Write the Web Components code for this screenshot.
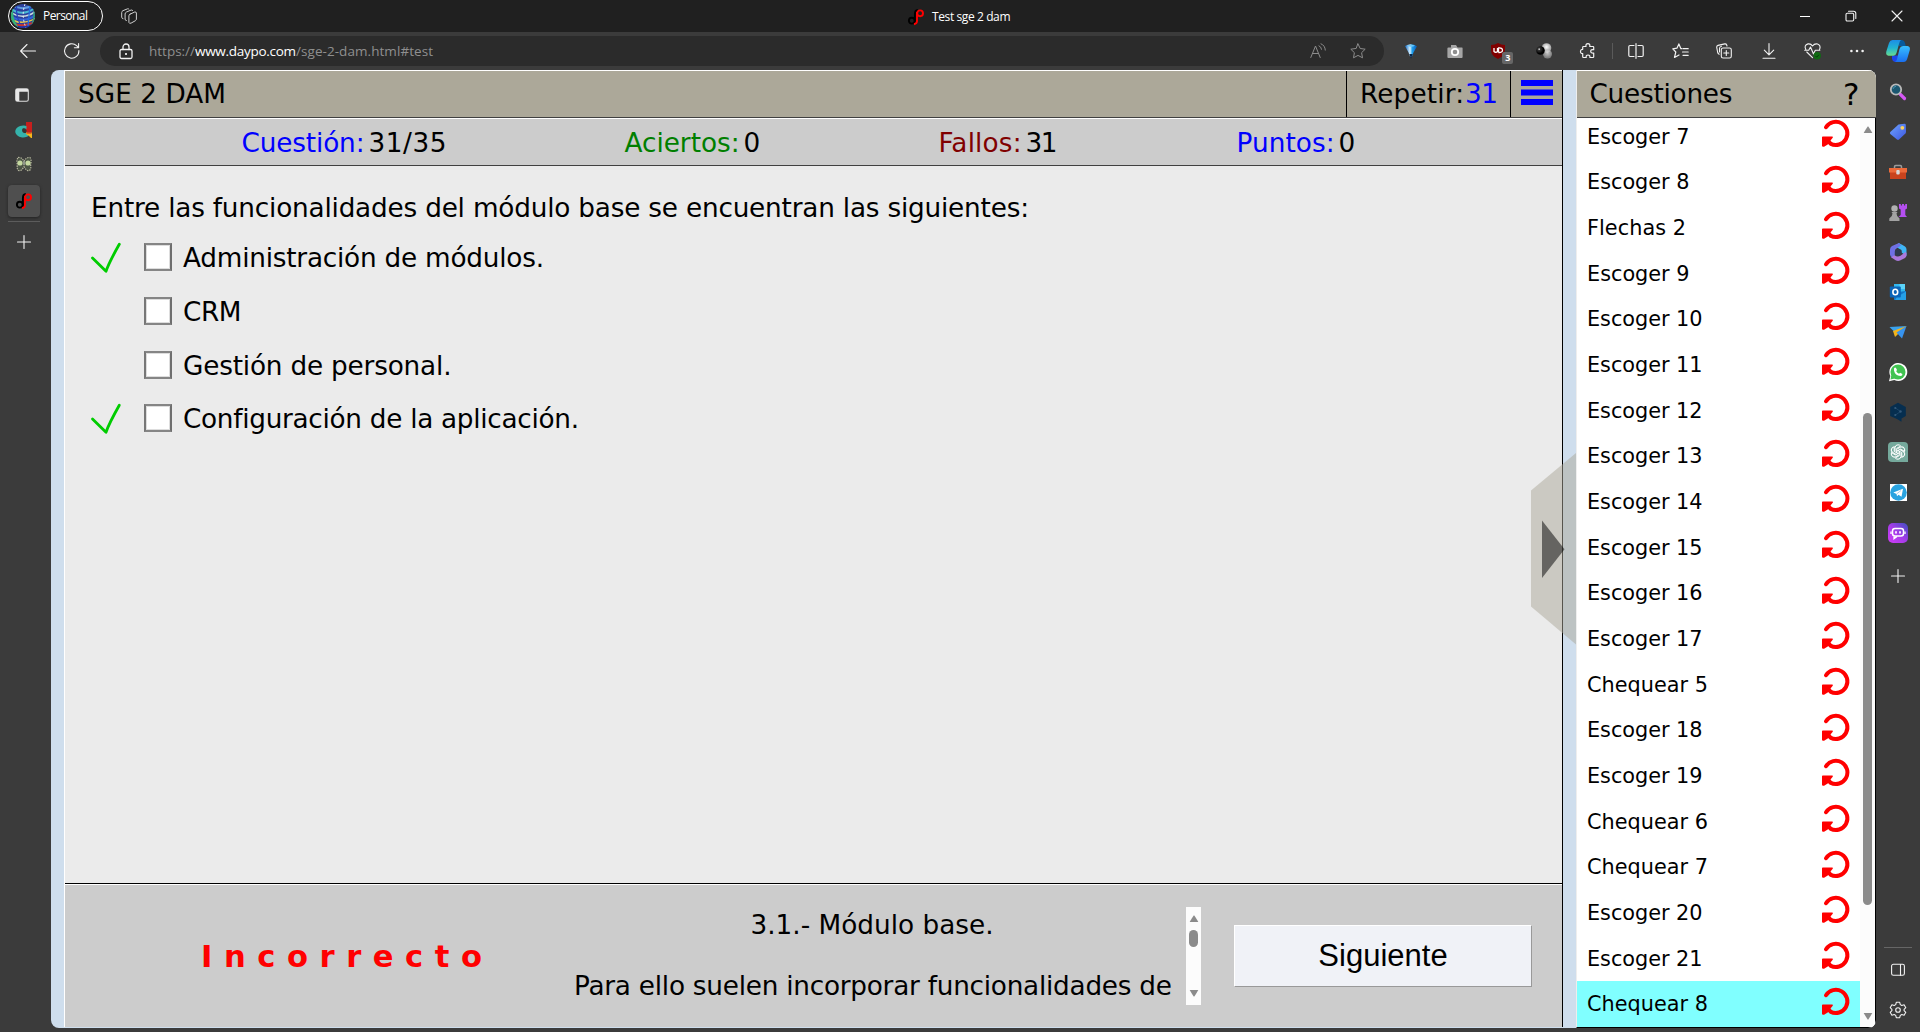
<!DOCTYPE html>
<html lang="es">
<head>
<meta charset="utf-8">
<title>Test sge 2 dam</title>
<style>
html,body{margin:0;padding:0;height:100%;overflow:hidden;background:#3b3b3b}
</style>
</head>
<body>
<browser-window></browser-window>
<script>
const define = (name, css, html, ready) => {
  customElements.define(name, class extends HTMLElement {
    connectedCallback() {
      if (this.shadowRoot) return;
      const root = this.attachShadow({ mode: 'open' });
      root.innerHTML = '<style>*{box-sizing:border-box}' + css + '</style>' + (typeof html === 'function' ? html(this) : html);
      if (ready) ready(this, root);
    }
  });
};

/* Text tracked so that its line takes exactly the width in "w". */
define('fit-text', ':host{display:inline-block;white-space:pre}span{display:inline-block;white-space:pre}',
  el => '<span>' + el.getAttribute('t') + '</span>',
  (el, root) => {
    const s = root.querySelector('span'), w = +el.getAttribute('w'), n = s.textContent.length;
    if (!w) return;
    const ls = n > 1 ? (w - s.getBoundingClientRect().width) / (n - 1) : 0;
    s.style.letterSpacing = ls + 'px';
    s.style.marginRight = -ls + 'px';
  });

const pen = (color = '#f2f2f2', width = 1.1) => `fill="none" stroke="${color}" stroke-width="${width}" stroke-linecap="round" stroke-linejoin="round"`;
const S = pen();
const ICONS = {
  avatar: [24, 24, `<defs><clipPath id="c"><circle cx="12" cy="12" r="12"/></clipPath></defs><g clip-path="url(#c)" fill="none"><rect width="24" height="24" fill="#2c3f9c"/><path d="M-1 4Q12 14 25 3" stroke="#49b9d2" stroke-width="2"/><path d="M-1 0Q12 9 25 -1" stroke="#5f9be0" stroke-width="2"/><path d="M-1 8Q12 17 25 7" stroke="#c7d8df" stroke-width="1.500"/><path d="M-1 12Q12 20 25 11" stroke="#3264d8" stroke-width="2"/><path d="M-1 15Q12 22 25 14" stroke="#e0c34a" stroke-width="1.6"/><path d="M-1 18Q12 25 25 17" stroke="#c8342f" stroke-width="2"/><path d="M-1 21Q12 27 25 20" stroke="#222ba5" stroke-width="2"/><path d="M1 2Q-1 14 6 24" stroke="#32b27a" stroke-width="3"/><path d="M6 0Q4 10 9 20" stroke="#2743c0" stroke-width="1.300"/><path d="M14 0Q10 12 15 24" stroke="#eef0f0" stroke-width="1" stroke-dasharray="2 2"/><path d="M19 1Q18 12 17 22" stroke="#1f6fe0" stroke-width="1.300"/><path d="M23 4Q24 12 21 22" stroke="#2e9c78" stroke-width="1.6"/></g>`],
  workspaces: [16, 16, `<g ${pen('#cfcfcf', 1)}><path d="M9 6.200 13.700 4q1.500-.4 1.700 1v6.200q-.1 1-1 1.500l-4.300 2.400q-1.800.8-2.200-.7V7.800q0-1.100 1.100-1.600z"/><path d="M5.400 12.600q-1.300-.1-1.300-1.500V6q0-1.300 1.200-1.900L10.200 2q1.200-.2 1.500.6"/><path d="M2 10.700Q.7 10.500.7 9.200V4.500q0-1.300 1.200-1.800L6.600.8q1-.2 1.400.4"/></g>`],
  back: [16, 16, `<path d="M15.500 8H.8M7 1.500.6 8 7 14.500" ${S}/>`],
  reload: [16, 16, `<path d="M14.900 7.500A7.200 7.200 0 1 1 12.600 2.700L14.400 4.600M14.600.6V4.800H10.400" ${S}/>`],
  lock: [14, 17, `<g ${pen('#f2f2f2', 1.3)}><rect x="1" y="6.500" width="12" height="9" rx="1.500"/><path d="M4 6.500V4a3 3 0 0 1 6 0v2.500"/></g><rect x="6.100" y="10.100" width="1.800" height="1.800" fill="#fff"/>`],
  aloud: [16, 16, `<g ${pen('#8c8c8c', 1)}><path d="M.8 14.500 5.500 3 10.200 14.500M2.500 10.500h6"/><path d="M9 2.800q2.300 1 2.500 3.500M11 .8q4 1.500 4.300 6.300"/></g>`],
  star: [16, 16, `<path d="M8 .9 10.200 5.500 15.200 6.200 11.600 9.700 12.500 14.800 8 12.400 3.500 14.800 4.400 9.700.8 6.200 5.800 5.500z" ${pen('#8c8c8c', 1)}/>`],
  gem: [14, 16, `<defs><linearGradient id="g"><stop offset="0" stop-color="#0b66c4"/><stop offset=".42" stop-color="#d6f1ff"/><stop offset=".6" stop-color="#1da0f0"/><stop offset="1" stop-color="#0956b0"/></linearGradient></defs><path d="M1 3Q7-.8 13 3.200L9.500 9.500 7.800 14H6.200L4.500 9.500z" fill="url(#g)"/><path d="M3 2.800Q7 .8 11 2.800 7 4.500 3 2.800z" fill="#6cc8fa"/><path d="M5.300 11h3.400L7 15.800z" fill="#08264b"/>`],
  camera: [16, 16, `<path d="M1.500 4.500H4V2h5l1.500 2.500H15q.6 0 .6.800V14q0 1-1 1H1.400q-1 0-1-1V5.500q0-1 1.100-1z" fill="#a6a6a6"/><circle cx="8" cy="9" r="3.200" fill="#8f8f8f" stroke="#fff" stroke-width="1.800"/>`],
  shield: [16, 16, `<path d="M8 0Q11 2 15 2v5q0 6-7 9Q1 13 1 7V2Q5 2 8 0z" fill="#800000"/><path d="M4 5v3.500q1.800 1.500 3.500 0V5M8.500 9.500V5q4-.3 4 2.200T8.500 9.500" fill="none" stroke="#fff" stroke-width="1.300"/>`],
  balls: [16, 16, `<defs><radialGradient id="b" cx=".35" cy=".35"><stop offset="0" stop-color="#fff"/><stop offset=".3" stop-color="#333"/><stop offset="1" stop-color="#000"/></radialGradient><radialGradient id="w" cx=".5" cy=".4"><stop offset="0" stop-color="#fff"/><stop offset="1" stop-color="#a0a0a0"/></radialGradient></defs><circle cx="10.500" cy="5" r="4.800" fill="url(#w)"/><circle cx="11.500" cy="11" r="4.500" fill="url(#w)" opacity=".7"/><circle cx="4.500" cy="7.500" r="4.300" fill="url(#b)"/>`],
  puzzle: [16, 16, `<path d="M3.500 3.500H6Q5.500.7 7.900.7T9.800 3.500h3.200q.7 0 .7.700V6.700q-3-.4-3 1.600t3 1.700v3.800q0 .7-.7.700H9.900Q10.200 12 8 12t-1.800 2.500H3.500q-.8 0-.8-.7V10.700Q.5 10.800.5 8.500t2.200-2.200V4.200q0-.7.800-.7z" ${pen('#f2f2f2', 1.2)}/>`],
  split: [16, 16, `<path d="M6 2.500H2Q.8 2.500.8 3.700v8.600q0 1.200 1.200 1.200h4M10 2.500h4q1.200 0 1.200 1.200v8.600q0 1.200-1.200 1.200h-4M8 .7v14.600" ${pen('#f2f2f2', 1.2)}/>`],
  favorites: [17, 16, `<path d="M9.700 5.700H8.900L6.900.9 4.900 5.200.8 5.900 3.800 9 2.500 14.500 7 12M11 5.700h5.200M10.500 9h5.700M11 12.300h5.200" ${pen('#f2f2f2', 1.2)}/>`],
  collections: [16, 16, `<rect x="5.300" y="5" width="10" height="10" rx="1.800" ${S}/><path d="M10.300 7.500v5M7.800 10h5M3.200 11.200Q2 10.700 1.700 9.500L.7 4.300Q.5 2.800 2 2.400L8.800.9q1.400-.2 1.900 1.100l.3 1M3.500 9V5.500q0-2 2-2.300" ${S}/>`],
  download: [16, 16, `<path d="M8 .6v11M3.300 7.200 8 11.900l4.700-4.700M2 15.300h12" ${S}/>`],
  health: [18, 17, `<path d="M1.800 6.500Q-.3 2 4 .9 7 .5 8.500 3 10.500.3 13.500 1q3.700 1.300 2.100 5.500M2.800 9l5.700 5.700M.7 7.300h4L6.500 4l3 7 1.800-3.700h4.500" ${S}/><circle cx="13.200" cy="12.800" r="3.700" fill="#0f6b12"/><path d="m11.500 13 1.200 1.200 2.200-2.400" fill="none" stroke="#083b0a"/>`],
  dots: [16, 16, `<g fill="#f2f2f2"><circle cx="2.400" cy="8" r="1.300"/><circle cx="8" cy="8" r="1.300"/><circle cx="13.600" cy="8" r="1.300"/></g>`],
  copilot: [24, 24, `<defs><linearGradient id="p" x2="0" y2="1"><stop offset="0" stop-color="#1c8de6"/><stop offset=".5" stop-color="#20b3d2"/><stop offset="1" stop-color="#67dc8f"/></linearGradient><linearGradient id="q" x2="0" y2="1"><stop offset="0" stop-color="#38bfff"/><stop offset="1" stop-color="#1a6ff0"/></linearGradient></defs><path d="M12 1h4q2.500.3 3 3l.8 3H13z" fill="#075a9c"/><path d="M6 16.500h7l-2 6.500H9q-2.500-.5-3-3z" fill="#1e43e8"/><path d="M6.500 1H15q-1.400 1-2 4L10.500 14q-.7 2.600-3 2.700H2.500Q-.5 16.500.3 12.500L3 4Q4 1.200 6.500 1z" fill="url(#p)"/><path d="M17 7h4.500q3 .5 2.300 4l-2.500 8.500Q20.300 23 17.500 23H9q1.500-.6 2.200-3.500L13.500 10q.7-2.800 3.500-3z" fill="url(#q)"/>`],
  minimize: [12, 12, `<path d="M1 6.500h10" stroke="#fff"/>`],
  restore: [12, 12, `<g ${S}><rect x="1" y="3.300" width="7.700" height="7.700" rx="1.200"/><path d="M3.500 1.200h5q2.300 0 2.300 2.300v5"/></g>`],
  close: [12, 12, `<path d="m1 1 10 10M11 1 1 11" ${S}/>`],
  daypo: [16, 16, `<g fill="none" stroke-width="1.900"><circle cx="3.800" cy="11.700" r="2.900" stroke="#000"/><path d="M6.900 15V5Q7 1.200 9.800 1" stroke="#000"/><circle cx="12.100" cy="4.300" r="2.900" stroke="red"/><path d="M9 3v9q0 2.500-3 3.200" stroke="red"/></g>`],
  tabs: [14, 14, `<rect x=".7" y=".7" width="12.600" height="12.600" rx="1.800" ${pen('#ddd')}/><path d="M1 1h12v2.800H4.300V13H1z" fill="#e8e8e8"/>`],
  site1: [16, 16, `<path d="M10 0h6v10h-6z" fill="#c71f1d"/><path d="M8 3.500a8 6 0 1 0 4.500 10.500L10 9H7q-1-2 2-2.500L10.500 7V4z" fill="#35b3ab"/><path d="M6 8q0-2 2.500-2v2h2v3H8q-2-.5-2-3z" fill="#3a3330"/><path d="M10 10.500h6V16h-1l-2-2-3-2z" fill="#f4b71c"/><path d="M10.500 11h5" stroke="#e3311d" stroke-width="1.200"/>`],
  site2: [16, 16, `<path d="M2 1.500q4-.5 6 4 2-4.500 6-4 2 3.500.5 7 1 4-1 6-3 1-5.500-4-2.500 5-5.500 4-2-2-1-6Q0 5 2 1.500z" fill="#4b5445" stroke="#b3b29c" stroke-width="1.200" stroke-dasharray="1.500 1"/><circle cx="4" cy="7" r="2.600" fill="#c5d9a0"/><circle cx="12" cy="7" r="2.600" fill="#c5d9a0"/><path d="M7 5h2v4H7z" fill="#8f9588"/>`],
  plus: [14, 14, `<path d="M7 .5v13M.5 7h13" ${S}/>`],
  search: [18, 18, `<path d="m11.500 11.500 4 4" stroke="#d657f5" stroke-width="3.200" stroke-linecap="round"/><circle cx="7" cy="6.500" r="5.200" fill="#1b5770" stroke="#b9b9b9" stroke-width="1.800"/><path d="M4 6q.5-2.500 3-2.700" fill="none" stroke="#4a93b0"/>`],
  tag: [18, 18, `<defs><linearGradient id="t" x2="1" y2="1"><stop offset="0" stop-color="#6fa5ff"/><stop offset="1" stop-color="#3d56e0"/></linearGradient></defs><path d="M9.500 1.500 15.500.7q1.200 0 1.300 1.200L17 9q0 .8-.6 1.400L10 16.600q-1 .8-2 0L1.300 11q-.8-1 0-2z" fill="url(#t)"/><circle cx="13.300" cy="4.800" r="1.900" fill="#ffd35a"/>`],
  toolbox: [18, 18, `<path d="M5.500 5.500V3.700q0-1.200 1.200-1.200h4.600q1.200 0 1.200 1.200v1.800" fill="none" stroke="#9b9b9b" stroke-width="1.500"/><path d="M1 5.500h16V16H1z" fill="#c9431d"/><path d="M0 5h18v4.500H0z" fill="#ec6a3a"/><rect x="7.300" y="7" width="3.400" height="4.500" rx="1" fill="#d9d9d9"/>`],
  chess: [18, 18, `<path d="M10 1h1.800v1.500H13V1h2v1.500h1.200V1H18v4.500l-1.700 1v5.500l1.700 2H9.500l2.200-2V6.500L10 5.500z" fill="#b44ff0"/><circle cx="5.500" cy="5.500" r="3.200" fill="#b0b0b0"/><path d="M2.500 9h6L7.500 10.500q0 3 3 5V18H.3v-2.500Q3.500 13.500 3.500 10.500z" fill="#a2a2a2"/>`],
  m365: [18, 18, `<path d="M9.500 0q1 0 6.500 3.500 1.500 1 1.500 3V13l-5-3.500V7L8 4.500z" fill="#3fb6f5"/><path d="M10 0 3 3Q1 4 1 6.500V11q0 2.500 2 3.500l2.800-2V8.500q0-2.200 2-3.200L12 2.500z" fill="#6f70e4"/><path d="M17.500 10v2q0 2-1.500 3l-5 2.500q-2 .8-4 0L2 14.300l3.500-2q3 2.200 6 .5L16.500 9z" fill="#ab79dc"/><path d="m6 8 3-2.500L12.500 8v3L9 13l-3-1.500z" fill="#2f3b50"/>`],
  outlook: [18, 18, `<path d="M5 1h11v10H5z" fill="#33b8ef"/><path d="M10.500 1H16v5h-5.500z" fill="#5bd4fa"/><path d="M5 9.500 17 8v9H5z" fill="#1277c8"/><path d="m8 14 9-5.500V17H6z" fill="#25a0e8"/><rect x=".8" y="3.500" width="11" height="11" rx="1" fill="#0b64b7"/><ellipse cx="6.300" cy="9" rx="2.400" ry="2.700" fill="none" stroke="#fff" stroke-width="1.600"/>`],
  send: [18, 18, `<path d="M.5 4 17.500 3 5.500 9z" fill="#3aa2ec"/><path d="M4 8 17.500 3 6 14z" fill="#f4b41a"/><path d="m7.500 9.500 10-6.500-4.500 12.500z" fill="#3793ee"/>`],
  whatsapp: [20, 20, `<path d="M1 19.300 2.300 14A9 9 0 1 1 6.300 18z" fill="#fff"/><circle cx="10" cy="10" r="7.500" fill="#41c351"/><path d="M3.300 13 2.500 17.500 7 16.500z" fill="#41c351"/><path d="M6 6.500Q7 5 8 6l1 2-.8 1.200q1 1.800 2.800 2.500l1.200-1 2.200 1.200q.3 2-2 2.200Q7 13.500 6 8.500z" fill="#fff"/>`],
  deepl: [18, 20, `<path d="M9 .8 16.800 5v9L12.500 16.500v3.200L8 17 1.200 14V5z" fill="#062e4f"/><path d="m6.500 6 5 3.500-5 3.500" fill="none" stroke="#1c4568"/><g fill="#34597a"><circle cx="6.300" cy="6" r="1.100"/><circle cx="11.500" cy="9.500" r="1.200"/><circle cx="6.300" cy="13" r="1.100"/></g>`],
  chatgpt: [20, 20, `<path d="M4 0h12q4 0 4 4v16H4q-4 0-4-4V4q0-4 4-4z" fill="#75a99c"/><g fill="none" stroke="#fff" stroke-width="1">${[0, 60, 120, 180, 240, 300].map(a => `<path transform="rotate(${a} 10 10)" d="M7 9V5.500Q7.500 2.800 10 2.800q1.700 0 2.700 1.200L8.700 6.400V11"/>`).join('')}</g>`],
  telegram: [17, 17, `<rect width="17" height="17" fill="#fff"/><circle cx="8.500" cy="8.500" r="8.300" fill="#29a3e0"/><path d="M3.300 8.500 13 4.700 11.500 12.800 8.500 10.800 7 12.300 6.600 9.900z" fill="#fff"/><path d="m6.700 9.900 4.300-3.400" stroke="#a9cfe8"/>`],
  poe: [20, 20, `<defs><linearGradient id="o" x1="0" y1="1" x2="1" y2="0"><stop offset="0" stop-color="#d23cf8"/><stop offset=".5" stop-color="#a43ce8"/><stop offset="1" stop-color="#3c4fc0"/></linearGradient></defs><rect width="20" height="20" rx="5" fill="url(#o)"/><rect x="4.500" y="5.500" width="11" height="7.500" rx="2.500" fill="none" stroke="#fff" stroke-width="1.500"/><path d="M3 8.500v2.500M17 8.500v2.500M6 13.500v2.300l3-2.300" stroke="#fff" stroke-width="1.300" fill="#fff"/><path d="M8 8.200v2.300M12 8.200v2.300" stroke="#fff" stroke-width="1.700"/>`],
  panel: [14, 14, `<rect x=".6" y="1.300" width="12.800" height="11" rx="1.800" ${S}/><path d="M9.500 1.500v10.800" ${S}/>`],
  gear: [18, 18, `<path d="M7.300 1.300h3.400l.6 2.300 1.500.9 2.300-.7 1.700 2.900-1.700 1.600v1.400l1.700 1.600-1.700 2.900-2.300-.7-1.500.9-.6 2.300H7.300l-.6-2.300-1.500-.9-2.300.7L1.200 11.300 2.900 9.700V8.300L1.200 6.700l1.700-2.900 2.300.7 1.500-.9z" ${S}/><circle cx="9" cy="9" r="2.300" ${S}/>`],
  check: [30, 31, `<path d="M1.500 15 15 28.300Q18 19.500 28.300 1.300" fill="none" stroke="#0c0" stroke-width="2.800" stroke-linecap="round" stroke-linejoin="round"/>`],
  repeat: [30, 30, `<path d="M5 8.200A11.600 11.600 0 1 1 9.500 24.700" fill="none" stroke="red" stroke-width="4" stroke-linecap="round"/><path d="M1 18.300q0-.8.800-.8h9.700q.9.600 0 1.600L9.500 21.500l2.500 3-2 2-2.500-1.500-4.400 2.700q-2.100.6-2.100-1z" fill="red"/>`],
  menu: [32, 26, `<path d="M0 0h32v6H0zM0 9.500h32v6H0zM0 19h32v6H0z" fill="#00f"/>`],
  up: [10, 7, `<path d="M5 .3Q5.500.3 9.300 7H.7Q4.500.3 5 .3z" fill="#8b8b8b"/>`],
  down: [10, 7, `<path d="M5 6.700Q4.500 6.700.7 0h8.600Q5.500 6.700 5 6.700z" fill="#8b8b8b"/>`]
};

define('ui-icon', ':host{display:inline-flex;flex:none;align-items:center;justify-content:center}svg{display:block;overflow:visible}',
  el => { const [w, h, d] = ICONS[el.getAttribute('name')]; return `<svg width="${w}" height="${h}" viewBox="0 0 ${w} ${h}">${d}</svg>`; });

define('title-bar', `
  :host{display:flex;height:32px;background:#202020;color:#fff;font:12px/30px "Open Sans",sans-serif;align-items:center}
  .pill{display:flex;align-items:center;width:95px;height:30px;margin-left:8px;border:1px solid #fff;border-radius:15px;padding-left:2px;gap:8px}
  .title{display:flex;align-items:center;gap:8px;margin-left:771px;flex:1;padding-top:1px}
  .win ui-icon{width:46px}.win{display:flex}`,
  `<div class="pill"><ui-icon name="avatar"></ui-icon><fit-text t="Personal" w="45"></fit-text></div>
   <ui-icon name="workspaces" style="margin-left:18px"></ui-icon>
   <div class="title"><ui-icon name="daypo"></ui-icon><fit-text t="Test sge 2 dam" w="78.500"></fit-text></div>
   <div class="win"><ui-icon name="minimize"></ui-icon><ui-icon name="restore"></ui-icon><ui-icon name="close"></ui-icon></div>`);

define('tool-bar', `
  :host{display:flex;height:38px;align-items:center;background:#3b3b3b;font:13.500px/30px "Open Sans",sans-serif;color:#8f8f8f}
  .addr{display:flex;align-items:center;margin-left:20px;width:1284px;height:30px;border-radius:15px;background:#2b2b2b;padding-left:19px}
  .url{margin-left:16px;flex:1;display:flex}.url b{font-weight:400;color:#fff}
  .ext{display:flex;align-items:center;margin-left:5px}.ext>ui-icon,.badge{width:44.200px;display:flex;justify-content:center}
  .badge{position:relative}.badge span{position:absolute;left:25px;top:9px;width:11px;height:12px;border-radius:2px;background:#666;color:#fff;font:bold 9px/12px "Open Sans",sans-serif;text-align:center}
  .sep{width:1px;height:16px;background:#5a5a5a;margin:0 1px 0 2px}`,
  `<ui-icon name="back" style="margin-left:20px"></ui-icon><ui-icon name="reload" style="margin-left:28px"></ui-icon>
   <div class="addr"><ui-icon name="lock"></ui-icon>
     <div class="url"><fit-text t="https://" w="46"></fit-text><b><fit-text t="www.daypo.com" w="101"></fit-text></b><fit-text t="/sge-2-dam.html#test" w="137"></fit-text></div>
     <ui-icon name="aloud" style="margin-right:24px"></ui-icon><ui-icon name="star" style="margin-right:18px"></ui-icon></div>
   <div class="ext"><ui-icon name="gem"></ui-icon><ui-icon name="camera"></ui-icon><div class="badge"><ui-icon name="shield" style="margin-left:-2px"></ui-icon><span>3</span></div><ui-icon name="balls"></ui-icon><ui-icon name="puzzle"></ui-icon><div class="sep"></div>
   <ui-icon name="split"></ui-icon><ui-icon name="favorites"></ui-icon><ui-icon name="collections"></ui-icon><ui-icon name="download"></ui-icon><ui-icon name="health"></ui-icon><ui-icon name="dots"></ui-icon><ui-icon name="copilot" style="width:38px"></ui-icon></div>`);

define('tab-rail', `
  :host{display:flex;flex-direction:column;align-items:center;flex:0 0 51px;padding:8px 3px 0 0;background:#3b3b3b}
  ui-icon{width:32px;height:34.500px}
  .on{height:32px;border-radius:4px;background:#4f4f4f;box-shadow:0 1px 3px #222;display:flex;margin-top:3px}.on ui-icon{height:32px}
  hr{width:32px;height:1px;border:0;background:#5c5c5c;margin:4px 0 3px}`,
  `<ui-icon name="tabs" style="width:34px;padding-right:4px"></ui-icon><ui-icon name="site1" style="height:34px"></ui-icon><ui-icon name="site2" style="height:35.500px"></ui-icon><div class="on"><ui-icon name="daypo"></ui-icon></div><hr><ui-icon name="plus" style="padding-right:1px"></ui-icon>`);

define('side-rail', `
  :host{display:flex;flex-direction:column;flex:0 0 44px;align-items:center;background:#3b3b3b;padding:1.500px 0 2px}
  ui-icon{width:32px;height:40.100px}hr{width:28px;height:1px;border:0;background:#666;margin:auto 0 2px}`,
  ['search', 'tag', 'toolbox', 'chess', 'm365', 'outlook', 'send', 'whatsapp', 'deepl', 'chatgpt', 'telegram', 'poe', 'plus'].map(n => `<ui-icon name="${n}"${n === 'plus' ? ' style="height:46px"' : ''}></ui-icon>`).join('') +
  '<hr><ui-icon name="panel"></ui-icon><ui-icon name="gear"></ui-icon>');

define('scroll-bar', `
  :host{display:flex;flex-direction:column;align-items:center;width:15px;flex:none;background:#fcfcfc}
  div{background:#8b8b8b;border-radius:5px;flex:none}`,
  el => `<ui-icon name="up"></ui-icon><div style="${el.getAttribute('thumb')}"></div><ui-icon name="down" style="margin-top:auto"></ui-icon>`);

define('title-strip', `
  :host{display:flex;height:48px;flex:none;background:#aca899;border-top:1px solid #fff;border-bottom:1px solid #404040;line-height:46px}`, '<slot></slot>');

define('stat-item', ':host{display:flex;gap:4px;color:#000}.l{color:var(--c)}',
  el => `<fit-text class="l" t="${el.getAttribute('label')}" w="${el.getAttribute('lw')}"></fit-text><fit-text t="${el.getAttribute('value')}" w="${el.getAttribute('vw')}"></fit-text>`);

define('answer-option', `
  :host{display:flex;height:53.700px;align-items:center}
  fit-text{margin-bottom:1px}
  .mark{width:53px;height:31px}.box{width:28px;height:28px;margin:-3px 11px 0 27px;margin-left:27px;background:#fff;border:2px solid #858585;border-right-color:#6e6e6e;border-left-color:#777;box-shadow:inset 0 0 0 1px #ddd}`,
  el => `<div class="mark">${el.hasAttribute('right') ? '<ui-icon name="check"></ui-icon>' : ''}</div><div class="box" style="margin-left:0"></div><fit-text t="${el.getAttribute('label')}" w="${el.getAttribute('w')}"></fit-text>`);

define('quiz-panel', `
  :host{display:flex;flex-direction:column;width:1499px;flex:none;border-left:1px solid #fff;border-right:1px solid #000;background:#ebebeb;font:26.300px/46px "DejaVu Sans",Verdana,sans-serif;color:#000}
  .name{flex:1;padding-left:13px}.rep{width:164px;border-left:1px solid #000;padding-left:13px;display:flex}.rep b{font-weight:400;color:#00f;margin-left:1px}
  .burger{width:52px;border-left:1px solid #000;padding:9px 0 0 10px;line-height:0}
  .stats{display:grid;grid-template-columns:383px 314px 298px 1fr;padding-left:176.500px;height:48px;flex:none;background:#ccc;border-top:1px solid #fff;border-bottom:1px solid #404040;line-height:48px}
  .body{flex:1;padding:27px 0 0 26px;line-height:32px}
  .q{height:32px;margin-bottom:7px;line-height:31px}
  .foot{display:flex;height:144px;flex:none;background:#ccc;border-top:1px solid #000;box-shadow:inset 0 1px #fff}
  .res{width:509px;padding:53px 0 0 136px;font:bold 30.600px/40px "DejaVu Sans",Verdana,sans-serif;color:red}
  .exp{width:612px;height:98px;margin-top:23px;overflow:hidden;text-align:center;line-height:30.700px;padding:2.500px 16px 0 0}
  .exp div{height:30.700px;white-space:nowrap}
  scroll-bar{margin-top:23px;height:98px;padding:8px 0}
  button{margin:41px 0 0 33px;width:298px;height:62px;padding:0;border:1px solid #fff;border-right-color:#999;border-bottom:1px solid #999;border-radius:0;background:#f0f2f7;font:31px/58px "Liberation Sans",Arial,sans-serif;color:#000}`,
  `<title-strip><span class="name"><fit-text t="SGE 2 DAM" w="148"></fit-text></span>
     <span class="rep"><fit-text t="Repetir:" w="104"></fit-text><b><fit-text t="31" w="33"></fit-text></b></span><span class="burger"><ui-icon name="menu"></ui-icon></span></title-strip>
   <div class="stats"><stat-item label="Cuestión:" lw="123" value="31/35" vw="78" style="--c:#00f"></stat-item>
     <stat-item label="Aciertos:" lw="115" value="0" style="--c:#007f00"></stat-item>
     <stat-item label="Fallos:" lw="83" value="31" vw="32" style="--c:#800000"></stat-item>
     <stat-item label="Puntos:" lw="98" value="0" style="--c:#00f"></stat-item></div>
   <div class="body"><div class="q"><fit-text t="Entre las funcionalidades del módulo base se encuentran las siguientes:" w="938"></fit-text></div>
     <answer-option right label="Administración de módulos." w="361"></answer-option>
     <answer-option label="CRM" w="58.500"></answer-option>
     <answer-option label="Gestión de personal." w="268.500"></answer-option>
     <answer-option right label="Configuración de la aplicación." w="396"></answer-option></div>
   <div class="foot"><div class="res"><fit-text t="Incorrecto" w="281"></fit-text></div>
     <div class="exp"><div><fit-text t="3.1.- Módulo base." w="243"></fit-text></div><div></div><div><fit-text t="Para ello suelen incorporar funcionalidades de" w="598"></fit-text></div></div>
     <scroll-bar thumb="width:9px;height:17px;margin-top:8px"></scroll-bar><button>Siguiente</button></div>`);

define('question-row', `
  :host{display:flex;height:45.660px;flex:none;align-items:center;padding:0 9px 0 10px;justify-content:space-between}
  :host([current]){background:#80ffff}ui-icon{margin-top:-5px}`,
  el => { const t = el.getAttribute('label'); return `<fit-text t="${t}" w="${el.getAttribute('w')}"></fit-text><ui-icon name="repeat"></ui-icon>`; });

define('question-list', `
  :host{display:flex;flex-direction:column;width:300px;flex:none;border-left:1px solid #eee;background:#fff;font:26.300px/46px "DejaVu Sans",Verdana,sans-serif;color:#000;border-bottom:1px solid #000}
  .cap{flex:1;padding-left:12.500px}.help{width:33px;font:31px/46px "DejaVu Sans",Verdana,sans-serif}
  .list{flex:1;display:flex;min-height:0;border-right:1px solid #000}
  .rows{flex:1;display:flex;flex-direction:column;justify-content:flex-end;overflow:hidden;min-height:0;font-size:20.800px}
  scroll-bar{padding:8px 0 7px;height:100%}`,
  () => {
    const names = ['Escoger 7', 'Escoger 8', 'Flechas 2', 'Escoger 9', 'Escoger 10', 'Escoger 11', 'Escoger 12', 'Escoger 13', 'Escoger 14', 'Escoger 15', 'Escoger 16', 'Escoger 17', 'Chequear 5', 'Escoger 18', 'Escoger 19', 'Chequear 6', 'Chequear 7', 'Escoger 20', 'Escoger 21', 'Chequear 8'];
    const width = n => n[0] === 'C' ? 121 : n[0] === 'F' ? 99 : n.length === 9 ? 102.5 : 115.5;
    return `<title-strip><span class="cap"><fit-text t="Cuestiones" w="143"></fit-text></span><span class="help">?</span></title-strip>
      <div class="list"><div class="rows">${names.map((n, i) => `<question-row label="${n}" w="${width(n)}"${i === 19 ? ' current' : ''}></question-row>`).join('')}</div>
      <scroll-bar thumb="width:9px;height:492px;margin-top:280px"></scroll-bar></div>`;
  });

define('side-handle', ':host{position:absolute;left:1480px;top:383px;width:45px;height:192px}svg{display:block}',
  `<svg width="45" height="192"><path d="M0 37.500 45 0V191.500L0 153.500z" fill="#aca899" fill-opacity=".5"/><path d="M11 67.500 33.500 96.200 11 125z" fill="#000" fill-opacity=".5"/></svg>`);

define('web-page', ':host{display:flex;width:1825px;height:958px;flex:none;padding-left:13px;background:#cfdeed;border-radius:8px;overflow:hidden;position:relative}question-list{margin-left:13px}quiz-panel{height:957px}',
  '<quiz-panel></quiz-panel><question-list></question-list><side-handle></side-handle>');

define('browser-window', ':host{display:flex;flex-direction:column;width:1920px;height:1032px;background:#3b3b3b}main{display:flex;flex:1}',
  '<title-bar></title-bar><tool-bar></tool-bar><main><tab-rail></tab-rail><web-page></web-page><side-rail></side-rail></main>');
</script>
</body>
</html>
